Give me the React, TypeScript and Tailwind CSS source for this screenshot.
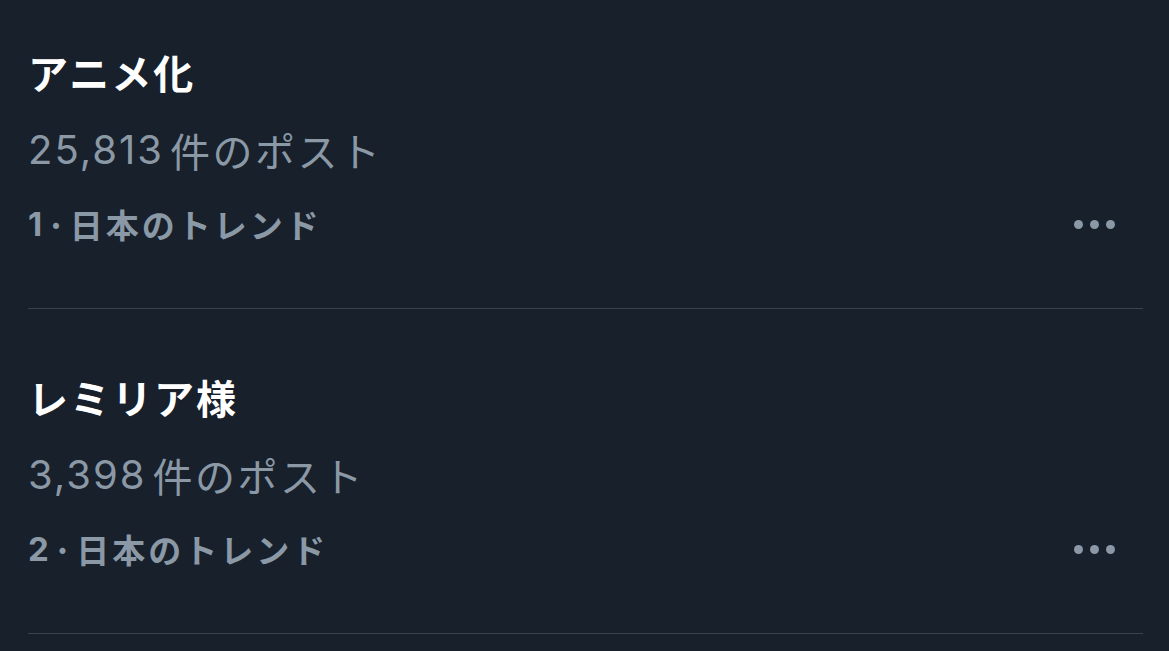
import React from "react";

const font = { fontFamily: '"Noto Sans CJK JP", "Noto Sans", sans-serif' };
const numFont = { fontFamily: 'Inter, "Noto Sans CJK JP", sans-serif' };

function Dots() {
  return (
    <div className="flex items-center gap-[7px] pr-[28px]">
      <span className="block w-[9px] h-[9px] rounded-full bg-[#8b98a5]" />
      <span className="block w-[9px] h-[9px] rounded-full bg-[#8b98a5]" />
      <span className="block w-[9px] h-[9px] rounded-full bg-[#8b98a5]" />
    </div>
  );
}

function Item({ title, count, rank, first }: { title: string; count: string; rank: string; first?: boolean }) {
  return (
    <div className={`border-b border-[#38444d] pb-[60px] ${first ? "pt-[44px]" : "pt-[60px]"}`}>
      <div className="text-[40px] font-bold leading-[56px] text-white tracking-[2px]">{title}</div>
      <div className="mt-[22px] text-[40px] leading-[56px] text-[#8b98a5] flex items-center">
        <span style={numFont} className="font-normal tracking-[2px]">{count}</span>
        <span className="ml-[6px] tracking-[2.5px]">件のポスト</span>
      </div>
      <div className="mt-[22px] flex items-center justify-between">
        <div className="text-[33px] font-bold leading-[48px] text-[#8b98a5] tracking-[3px] flex items-center">
          <span style={numFont} className="tracking-normal">{rank}</span>
          <span className="ml-[4px] mr-[4px] tracking-normal">·</span>
          <span>日本のトレンド</span>
        </div>
        <Dots />
      </div>
    </div>
  );
}

export default function App() {
  return (
    <div className="w-[1169px] h-[651px] overflow-hidden bg-[#17202b] pl-[28px] pr-[26px]" style={font}>
      <Item first title="アニメ化" count="25,813" rank="1" />
      <Item title="レミリア様" count="3,398" rank="2" />
    </div>
  );
}
